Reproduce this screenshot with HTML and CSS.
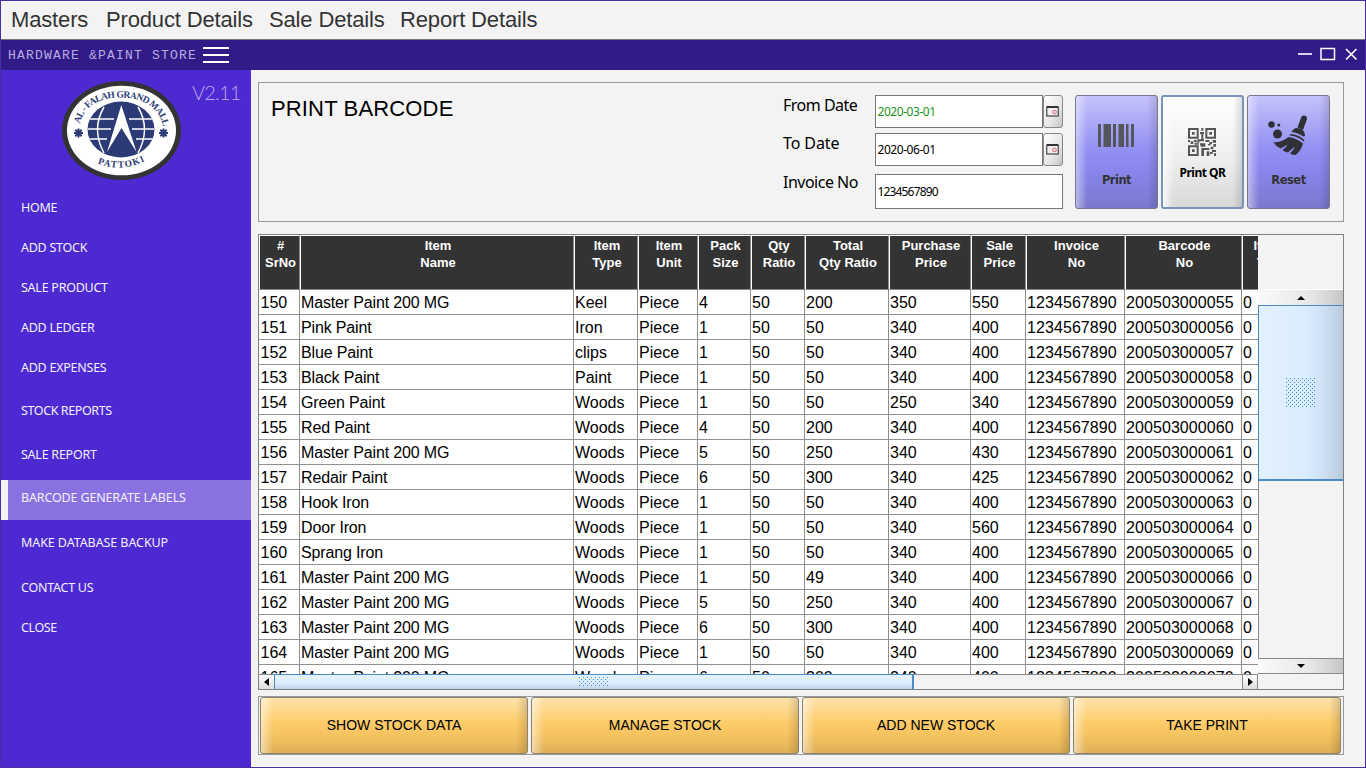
FILE: index.html
```html
<!DOCTYPE html>
<html lang="en">
<head>
<meta charset="utf-8">
<title>Hardware &amp; Paint Store</title>
<link rel="stylesheet" href="styles.css">
</head>
<body>
<div class="window">
  <nav class="menubar"><span class="m1">Masters</span><span class="m2">Product Details</span><span class="m3">Sale Details</span><span>Report Details</span></nav>
  <header class="titlebar">
    <span class="brand">HARDWARE &amp;PAINT STORE</span>
    <svg class="burger" width="26" height="17"><path d="M0 1h26M0 8h26M0 15h26" stroke="#fff" stroke-width="2"/></svg>
    <svg class="controls" width="60" height="16"><path d="M0 7h14" stroke="#fff" stroke-width="1.6"/><rect x="23" y="1.5" width="13.5" height="11" fill="none" stroke="#fff" stroke-width="1.5"/><path d="M48 2l10.500 10.500M58.500 2L48 12.500" stroke="#fff" stroke-width="1.6"/></svg>
  </header>
  <div class="body">
    <aside class="sidebar">
      <div class="logo-row">
        <svg class="logo" width="126" height="108" viewBox="0 0 126 108">
          <defs>
            <path id="top" d="M22 48C26 28.500 43 21.500 63.500 21.500S101 31 105 50L107 60"/>
            <path id="bottom" d="M38.500 87Q63.500 97.500 89 84L94 81"/>
            <clipPath id="globe"><ellipse cx="63" cy="53.500" rx="33.500" ry="28"/></clipPath>
          </defs>
          <ellipse cx="63.500" cy="54.500" rx="59.500" ry="49.500" fill="#333"/>
          <ellipse cx="63.500" cy="54.500" rx="54.500" ry="44.800" fill="#fff"/>
          <ellipse cx="63" cy="53.500" rx="33.500" ry="28" fill="#2c3b76"/>
          <g clip-path="url(#globe)" fill="none" stroke="#fff" stroke-width="1.500">
            <path d="M29 43h27M29 53h24M29 63h20M71 43h27M74 53h24M78 63h20"/>
            <path d="M46 31Q33 53 46 77M80 31Q93 53 80 77"/>
          </g>
          <path d="M63.300 29L78.500 76 63.500 52 49 76z" fill="#fff"/>
          <g fill="#2c3b76" stroke="#2c3b76" stroke-width="2"><path d="M16 57h9M20.500 52.500v9M17.300 53.800l6.400 6.400M23.700 53.800l-6.400 6.400M101 57h9M105.500 52.500v9M102.300 53.800l6.400 6.400M108.700 53.800l-6.400 6.400"/></g>
          <text class="logo-text"><textPath href="#top" textLength="109">AL - FALAH GRAND MALL</textPath></text>
          <text class="logo-text"><textPath href="#bottom" startOffset="1" textLength="49">PATTOKI</textPath></text>
        </svg>
        <span class="version">V2.11</span>
      </div>
      <ul class="nav">
        <li>HOME</li><li>ADD STOCK</li><li>SALE PRODUCT</li><li>ADD LEDGER</li><li>ADD EXPENSES</li>
        <li class="gap3 tight">STOCK REPORTS</li><li class="gap4">SALE REPORT</li><li class="gap3 active">BARCODE GENERATE LABELS</li>
        <li class="gap5 wide">MAKE DATABASE BACKUP</li><li class="gap5">CONTACT US</li><li class="tight">CLOSE</li>
      </ul>
    </aside>
    <main class="main">
      <section class="form-panel">
        <h1>PRINT BARCODE</h1>
        <div class="labels"><label class="l1">From Date</label><label class="l2">To Date</label><label class="l3">Invoice No</label></div>
        <div class="fields">
          <div class="date"><div class="input green">2020-03-01</div><div class="pick"><svg width="13" height="11"><rect x=".75" y="1" width="11.500" height="9" fill="#f1eef0" stroke="#444" stroke-width="1.200"/><path d="M1 1h11" stroke="#333" stroke-width="2"/><circle cx="8.500" cy="6" r="1.800" fill="none" stroke="#d4616e"/></svg></div></div>
          <div class="date"><div class="input">2020-06-01</div><div class="pick"><svg width="13" height="11"><rect x=".75" y="1" width="11.500" height="9" fill="#f1eef0" stroke="#444" stroke-width="1.200"/><path d="M1 1h11" stroke="#333" stroke-width="2"/><circle cx="8.500" cy="6" r="1.800" fill="none" stroke="#d4616e"/></svg></div></div>
          <div class="input invoice">1234567890</div>
        </div>
        <div class="actions">
          <div class="act"><svg class="i-bar" width="36" height="23"><path d="M0 0h3v23H0zM5.500 0h7.500v23H5.500zM15 0h3v23h-3zM20.500 0h5.500v23h-5.500zM28 0h2.500v23H28zM33 0h3v23h-3z" fill="#54565c"/></svg><b class="t-print">Print</b></div>
          <div class="act focus"><svg class="i-qr" width="28" height="28" viewBox="0 0 21 21"><path fill="#555" fill-rule="evenodd" d="M0 0h8v8H0zM1.500 1.500v5h5v-5zM3 3h2v2H3zM13 0h8v8h-8zM14.500 1.500v5h5v-5zM16 3h2v2h-2zM0 13h8v8H0zM1.500 14.500v5h5v-5zM3 16h2v2H3zM10 0h1.500v2H10zM9 3h3v1.500H9zM10 4.500h1.500v4H10zM0 9h1.500v1.500H0zM2 10h2v2H2zM4.500 9h2v1.500h-2zM7 8.500h5V10H8.500v1.500H7zM5 11h3v1.500H5zM9 11.500h4V14H9.500v-1H9zM13 9h3v1.500h-3zM16 10.500h2V12h-2zM18.500 9h2.500v2h-2.500zM15 12h2v1h-2zM10 15h6v1.500h-4V21h-2zM14 17.500h2V21h-2zM17 14h2v2h-2zM19 12h2v2h-2zM18 16.500h3V18h-3zM16.500 18h2v1.500h-2zM19.500 19H21v2h-1.500z"/></svg><b class="t-qr">Print QR</b></div>
          <div class="act"><svg class="i-broom" width="42" height="42" viewBox="0 0 42 42" fill="#303036"><circle cx="4.500" cy="10.500" r="3.200"/><circle cx="11.800" cy="11" r="1.500"/><circle cx="10.500" cy="20" r="4.500"/><path d="M34.500 2.500c2-2 6-.500 5.500 2.500l-4 11-5.500-2.500z"/><path d="M24.500 18q3-5.500 8-3.500 5.500 1.500 5.500 7.500l-2 .500q-5-4-11.500-4.500z"/><path d="M23.500 20q8 .500 14 6l-.700 1.500Q30 22 22.700 21.500z"/><path d="M21.500 23q8 1 14.500 6.500Q34 37 28.500 41q-3 0-5.500-1.500 4-4 5-7-4 3-7 6-3-.500-5.500-2.500 4-3 5.500-5.500-4 2-7.500 4Q9 32.500 6.500 28.500q9-.500 15-5.500z"/></svg><b class="t-reset">Reset</b></div>
        </div>
      </section>
      <section class="table-panel">
        <div class="grid-view">
          <div class="viewport"><table class="grid">
            <colgroup><col class="c1"><col class="c2"><col class="c3"><col class="c4"><col class="c5"><col class="c6"><col class="c7"><col class="c8"><col class="c9"><col class="c10"><col class="c11"><col class="c12"></colgroup>
            <thead><tr><th>#<br>SrNo</th><th>Item<br>Name</th><th>Item<br>Type</th><th>Item<br>Unit</th><th>Pack<br>Size</th><th>Qty<br>Ratio</th><th>Total<br>Qty Ratio</th><th>Purchase<br>Price</th><th>Sale<br>Price</th><th>Invoice<br>No</th><th>Barcode<br>No</th><th class="cut">Item<br>&nbsp;Tax</th></tr></thead>
            <tbody id="rows"></tbody>
          </table></div>
          <div class="vside">
            <div class="corner"></div>
            <div class="vbtn up"><i class="tri-up"></i></div>
            <div class="vthumb"><svg width="30" height="30"><defs><pattern id="dots" width="4" height="4" patternUnits="userSpaceOnUse"><path d="M0 0h1v1H0zM2 2h1v1H2z" fill="#4389d0"/></pattern></defs><rect width="30" height="30" fill="url(#dots)"/></svg></div>
            <div class="vtrack"></div>
            <div class="vbtn down"><i class="tri-down"></i></div>
          </div>
        </div>
        <div class="hbar"><div class="hbtn"><i class="tri-left"></i></div><div class="hthumb"><svg width="30" height="10"><rect width="30" height="10" fill="url(#dots)"/></svg></div><div class="htrack"></div><div class="hbtn right"><i class="tri-right"></i></div><div class="hcorner"></div></div>
      </section>
      <section class="bottom"><div class="gold">SHOW STOCK DATA</div><div class="gold">MANAGE STOCK</div><div class="gold">ADD NEW STOCK</div><div class="gold">TAKE PRINT</div></section>
    </main>
  </div>
</div>
<script src="rows.js"></script>
</body>
</html>
```
FILE: styles.css
```css
* { box-sizing: border-box; }
body { margin: 0; font-family: "Liberation Sans", Arial, sans-serif; color: #000; overflow: hidden; }
.window { width: 1366px; height: 768px; border: 1px solid #4c2ca6; background: #f3f3f3; display: flex; flex-direction: column; }
.menubar { height: 39px; border-bottom: 1px solid #777; padding: 0 0 0 10px; display: flex; align-items: center; font-size: 22px; line-height: 38px; letter-spacing: -.15px; color: #333; white-space: nowrap; }
.m1 { width: 95px; } .m2 { width: 163px; } .m3 { width: 131px; }
.titlebar { height: 30px; background: #311b89; display: flex; align-items: center; padding: 0 7px; }
.brand { width: 195px; padding-top: 1px; font: 13px "Liberation Mono", monospace; letter-spacing: 1.2px; color: #b9addf; white-space: nowrap; }
.controls { margin-left: auto; }
.body { flex: 1; display: flex; min-height: 0; }
.sidebar { width: 250px; background: #4d29d1; }
.logo-row { height: 120px; display: flex; padding: 6px 0 0 57px; }
.logo { flex: none; }
.logo-text { font: bold 9.5px "Liberation Serif", serif; fill: #2c3b76; }
.version { margin-left: 8px; margin-top: 2px; font: 300 20px/28px Lato, sans-serif; letter-spacing: -.8px; color: #b6a8ee; white-space: nowrap; }
.nav { list-style: none; margin: 0; padding: 0; }
.nav li { height: 40px; padding-left: 20px; font: 12.5px/35px "Noto Sans", sans-serif; letter-spacing: -.25px; color: #f3f0fd; white-space: nowrap; }
.gap3 { margin-top: 3px; } .gap4 { margin-top: 4px; } .gap5 { margin-top: 5px; }
.nav .tight { letter-spacing: -.4px; } .nav .wide { letter-spacing: -.08px; }
.nav .active { background: #8a71e1; border-left: 7px solid #f3f1fc; padding-left: 13px; letter-spacing: -.15px; }
.main { flex: 1; padding: 12px 0 0 7px; }
.form-panel { width: 1086px; height: 140px; border: 1px solid #999; display: flex; }
h1 { margin: 11px 0 0 12px; width: 512px; font-size: 22px; font-weight: 400; line-height: 30px; letter-spacing: .15px; }
.labels { width: 92px; font: 16px/20px "Noto Sans", sans-serif; letter-spacing: -.5px; white-space: nowrap; display: flex; flex-direction: column; }
.l1 { margin-top: 12px; } .l2 { margin-top: 18px; } .l3 { margin-top: 19px; }
.l2 { letter-spacing: -.1px; }
.fields { width: 188px; padding-top: 12px; font: 12px/31px "Noto Sans", sans-serif; letter-spacing: -.45px; }
.date { display: flex; height: 33px; margin-bottom: 5px; }
.input { flex: 1; background: #fff; border: 1px solid #777; padding-left: 1.500px; }
.green { color: #1d941d; }
.pick { width: 20px; border: 1px solid #888; border-radius: 3px; background: linear-gradient(120deg, #fff, #e6e6e6 60%, #c4c4c4); display: flex; align-items: center; justify-content: center; }
.pick svg { flex: none; margin-left: -1px; }
.invoice { height: 35px; margin-top: 8px; line-height: 33px; letter-spacing: -.84px; }
.actions { display: flex; gap: 3px; margin: 12px 0 0 12px; }
.act { width: 83px; height: 114px; border: 1px solid #77778c; border-radius: 3px; background: linear-gradient(90deg, rgba(255,255,255,.45), rgba(255,255,255,0) 14%, rgba(0,0,0,0) 88%, rgba(0,0,0,.13)), linear-gradient(#c5c2fb, #9592f3 45%, #8986ee 65%, #7b79cd); display: flex; flex-direction: column; align-items: center; font: 12px/14px "DejaVu Sans", sans-serif; color: #333; }
.act b { white-space: nowrap; letter-spacing: -.5px; font-size: 11.5px; }
.focus { border: 2px solid #7894b8; background: linear-gradient(90deg, rgba(255,255,255,.8), rgba(255,255,255,0) 14%, rgba(0,0,0,0) 88%, rgba(0,0,0,.13)), linear-gradient(#fff, #ededed 60%, #d8d8d8); color: #000; }
.i-bar { margin: 28px 1px 0 0; } .t-print { margin-top: 26px; }
.i-qr { margin: 31px 1px 0 0; } .act .t-qr { margin-top: 9px; font: bold 12px/16px "Noto Sans", sans-serif; letter-spacing: -.5px; }
.i-broom { margin: 18px 2px 0 0; } .t-reset { margin-top: 17px; }
.table-panel { width: 1086px; height: 456px; margin-top: 12px; border: 1px solid #808080; }
.grid-view { display: flex; height: 439px; }
.viewport { width: 999px; overflow: hidden; background: #fff; }
.grid { width: 1042px; table-layout: fixed; border-collapse: separate; border-spacing: 0; }
.c1 { width: 41px; } .c2 { width: 274px; } .c3 { width: 64px; } .c4 { width: 60px; } .c5 { width: 53px; } .c6 { width: 54px; } .c7 { width: 84px; } .c8 { width: 82px; } .c9 { width: 55px; } .c10 { width: 99px; } .c11 { width: 117px; } .c12 { width: 59px; }
th { height: 55px; padding: 1px 0 0 2px; vertical-align: top; background: #333; color: #fff; font: bold 13px/17px "Liberation Sans", sans-serif; border-top: 1px solid #fff; border-left: 1px solid #fff; border-right: 1px solid #888; border-bottom: 1px solid #888; white-space: nowrap; }
th.cut { text-align: left; padding-left: 10.500px; }
td { height: 25px; padding: 1px 0 0 1px; border-right: 1px solid #909090; border-bottom: 1px solid #909090; font-size: 16px; line-height: 23px; white-space: nowrap; }
td:first-child { padding-left: 1.500px; }
td:nth-child(2) { letter-spacing: -.15px; }
td:nth-child(10), td:nth-child(11) { letter-spacing: .08px; }
.vside { width: 85px; display: flex; flex-direction: column; }
.corner { height: 55px; border-bottom: 1px solid #fff; }
.vbtn { height: 15px; background: linear-gradient(90deg, #fafafa, #e8e8e8 60%, #c6c6c6); display: flex; align-items: center; justify-content: center; }
.vthumb { height: 176px; border: solid #4b8bc8; border-width: 1px 0 2px 1px; background: linear-gradient(90deg, #e3f1ff, #d9ecff 60%, #c3d4e6 90%, #b8c9da); display: flex; align-items: center; justify-content: center; }
.vtrack { flex: 1; border-left: 1px solid #888; }
.down { height: 16px; border-top: 1px solid #888; border-bottom: 1px solid #888; }
.tri-up, .tri-down { border: 4px solid transparent; }
.tri-up { border-top: 0; border-bottom-color: #000; }
.tri-down { border-bottom: 0; border-top-color: #000; }
.hbar { height: 15px; display: flex; }
.hbtn { width: 15px; background: linear-gradient(#fff, #ddd); display: flex; align-items: center; justify-content: center; border-top: 1px solid #888; }
.right { width: 16px; border-left: 1px solid #888; border-right: 1px solid #888; }
.tri-left, .tri-right { border: 4px solid transparent; }
.tri-left { border-left: 0; border-right: 5px solid #000; }
.tri-right { border-right: 0; border-left: 5px solid #000; }
.hthumb { width: 640px; border: solid #4b8bc8; border-width: 1px 2px 0 1px; background: linear-gradient(#e6f3ff, #d9ecff 60%, #c0d2e5); display: flex; align-items: center; justify-content: center; }
.htrack { flex: 1; border-top: 1px solid #888; }
.hcorner { width: 85px; }
.bottom { width: 1086px; height: 59px; margin-top: 6px; border: 1px solid #999; padding-left: 1px; display: flex; gap: 3px; }
.gold { width: 268px; height: 57px; border: 1px solid #8c8270; border-radius: 3px; background: linear-gradient(90deg, rgba(255,255,255,.5), rgba(255,255,255,0) 4.5%, rgba(0,0,0,0) 96%, rgba(0,0,0,.14)), linear-gradient(#ffe2ab, #fdcc6a 45%, #f6c460 65%, #deb057); text-align: center; font-size: 14px; line-height: 55px; }
```
FILE: rows.js
```js
const items = [
  ["Master Paint 200 MG", "Keel", 4, 200, 350, 550],
  ["Pink Paint", "Iron", 1, 50, 340, 400],
  ["Blue Paint", "clips", 1, 50, 340, 400],
  ["Black Paint", "Paint", 1, 50, 340, 400],
  ["Green Paint", "Woods", 1, 50, 250, 340],
  ["Red Paint", "Woods", 4, 200, 340, 400],
  ["Master Paint 200 MG", "Woods", 5, 250, 340, 430],
  ["Redair Paint", "Woods", 6, 300, 340, 425],
  ["Hook Iron", "Woods", 1, 50, 340, 400],
  ["Door Iron", "Woods", 1, 50, 340, 560],
  ["Sprang Iron", "Woods", 1, 50, 340, 400],
  ["Master Paint 200 MG", "Woods", 1, 49, 340, 400],
  ["Master Paint 200 MG", "Woods", 5, 250, 340, 400],
  ["Master Paint 200 MG", "Woods", 6, 300, 340, 400],
  ["Master Paint 200 MG", "Woods", 1, 50, 340, 400],
  ["Master Paint 200 MG", "Woods", 6, 300, 340, 400]
];
document.getElementById("rows").innerHTML = items.map(([name, type, pack, total, buy, sale], i) =>
  "<tr>" + [150 + i, name, type, "Piece", pack, 50, total, buy, sale, "1234567890", 200503000055 + i, 0]
    .map(v => `<td>${v}</td>`).join("") + "</tr>").join("");
```
